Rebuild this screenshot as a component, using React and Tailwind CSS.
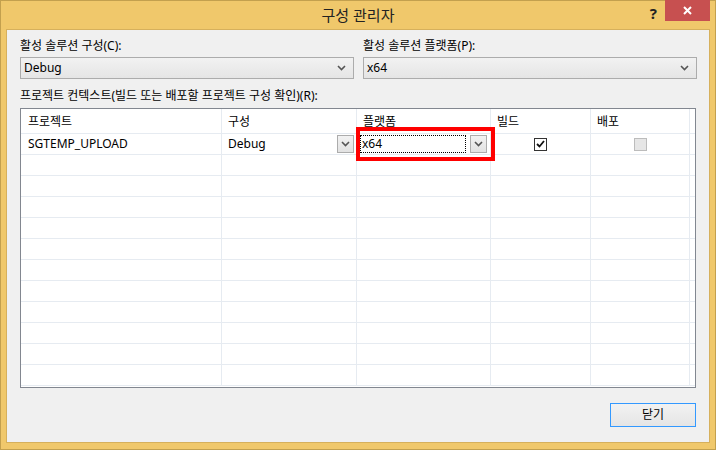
import React from "react";

const font = { fontFamily: '"Noto Sans", "Noto Sans CJK KR", sans-serif' };

const Chevron = () => (
    <svg width="9" height="6" viewBox="0 0 9 6">
        <path d="M1 1 L4.5 4.5 L8 1" fill="none" stroke="#555" strokeWidth="1.6" />
    </svg>
);

const Select = ({ value }) => (
    <div className="flex h-[22px] items-center justify-between border border-[#acacac] bg-gradient-to-b from-[#f2f2f2] to-[#e5e5e5] pl-[3px] pr-[7px] text-[12px] text-black">
        <span className="leading-[14px]">{value}</span>
        <Chevron />
    </div>
);

const DropBtn = () => (
    <div className="flex h-[18px] w-[17px] items-center justify-center border border-[#acacac] bg-gradient-to-b from-[#f2f2f2] to-[#e2e2e2]">
        <Chevron />
    </div>
);

const cols = "grid grid-cols-[201px_135px_134px_100px_99px_1fr]";
const cell = "border-r border-[#e6ebf1]";

const App = () => {
    const emptyRows = Array.from({ length: 11 });

    return (
        <div style={font} className="flex h-[450px] w-[716px] flex-col border border-[#c3a04e] bg-[#f0c86b] text-[12px] text-black">
            {/* title bar */}
            <div className="relative flex h-[28px] shrink-0 items-center justify-center">
                <span className="text-[15px] leading-[18px] text-[#222]">구성 관리자</span>
                <span className="absolute right-[58px] top-[3px] text-[15px] font-bold leading-[18px] text-[#222]">?</span>
                <div className="absolute right-[5px] top-[-1px] flex h-[21px] w-[45px] items-center justify-center bg-[#c75050]">
                    <svg width="9" height="9" viewBox="0 0 9 9">
                        <path d="M1 1 L8 8 M8 1 L1 8" stroke="#fff" strokeWidth="2" />
                    </svg>
                </div>
            </div>

            {/* client area */}
            <div className="mx-[5px] mb-[6px] flex flex-1 flex-col border border-[#d6b05c] bg-[#f0f0f0] pl-[13px] pr-[12px]">
                <div className="mt-[8px] grid grid-cols-[334px_1fr] gap-x-[9px]">
                    <div>
                        <div className="leading-[16px]">활성 솔루션 구성(C):</div>
                        <div className="mt-[3px]">
                            <Select value="Debug" />
                        </div>
                    </div>
                    <div>
                        <div className="leading-[16px]">활성 솔루션 플랫폼(P):</div>
                        <div className="mt-[3px]">
                            <Select value="x64" />
                        </div>
                    </div>
                </div>

                <div className="mt-[9px] leading-[16px]">프로젝트 컨텍스트(빌드 또는 배포할 프로젝트 구성 확인)(R):</div>

                <div className="relative mt-[4px] mr-[1px] h-[280px] overflow-hidden border border-[#828790] bg-white">
                    <div className={`${cols} h-[25px] border-b border-[#e6ebf1]`}>
                        <div className={`${cell} pl-[7px] pt-[5px] leading-[16px]`}>프로젝트</div>
                        <div className={`${cell} pl-[6px] pt-[5px] leading-[16px]`}>구성</div>
                        <div className={`${cell} pl-[6px] pt-[5px] leading-[16px]`}>플랫폼</div>
                        <div className={`${cell} pl-[6px] pt-[5px] leading-[16px]`}>빌드</div>
                        <div className={`${cell} pl-[6px] pt-[5px] leading-[16px]`}>배포</div>
                        <div />
                    </div>

                    <div className={`${cols} h-[21px] border-b border-[#e6ebf1]`}>
                        <div className={`${cell} flex items-center pl-[7px]`}>SGTEMP_UPLOAD</div>
                        <div className={`${cell} flex items-center justify-between pl-[6px] pr-[2px]`}>
                            <span>Debug</span>
                            <DropBtn />
                        </div>
                        <div className={`${cell} flex items-center pl-[3px] pr-[3px]`}>
                            <div className="flex h-[18px] w-[107px] items-center border border-dotted border-black pl-[1px]">x64</div>
                            <div className="ml-[4px]">
                                <DropBtn />
                            </div>
                        </div>
                        <div className={`${cell} flex items-center justify-center`}>
                            <div className="flex h-[13px] w-[13px] items-center justify-center border border-[#333] bg-white">
                                <svg width="9" height="8" viewBox="0 0 9 8">
                                    <path d="M1 4 L3.5 6.5 L8 1" fill="none" stroke="#111" strokeWidth="1.8" />
                                </svg>
                            </div>
                        </div>
                        <div className={`${cell} flex items-center justify-center`}>
                            <div className="h-[13px] w-[13px] border border-[#bcbcbc] bg-[#e6e6e6]" />
                        </div>
                        <div />
                    </div>

                    {emptyRows.map((_, i) => (
                        <div key={i} className={`${cols} h-[21px] border-b border-[#e6ebf1]`}>
                            <div className={cell} />
                            <div className={cell} />
                            <div className={cell} />
                            <div className={cell} />
                            <div className={cell} />
                            <div />
                        </div>
                    ))}

                    {/* red highlight */}
                    <div className="absolute left-[335px] top-[18px] h-[34px] w-[139px] border-[4px] border-[#ff0000]" />
                </div>

                <div className="mt-[15px] flex justify-end pr-[1px]">
                    <button className="h-[24px] w-[86px] border border-[#3399ff] bg-gradient-to-b from-[#f2f2f2] to-[#e5e5e5] text-[12px] leading-[14px]">
                        닫기
                    </button>
                </div>
            </div>
        </div>
    );
};

export default App;
